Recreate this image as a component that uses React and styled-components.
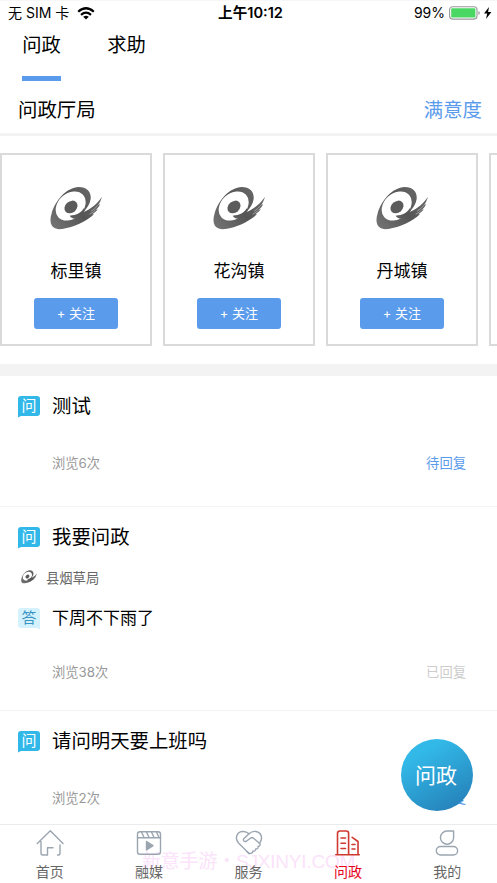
import React from 'react';
import styled, { createGlobalStyle, css } from 'styled-components';

const palette = {
  blue: '#5a9bec',
  cyan: '#32b8e8',
  red: '#e60020',
  iconRed: '#d0392f',
  icon: '#9aa5b0',
  line: '#f3f3f3',
};

const GlobalStyle = createGlobalStyle`
  * {
    box-sizing: border-box;
  }
  body {
    margin: 0;
    background: #fff;
    color: #000;
    font-family: Inter, 'Noto Sans CJK SC', sans-serif;
    overflow: hidden;
  }
`;

const Page = styled.div`
  position: relative;
  display: flex;
  flex-direction: column;
  width: 497px;
  height: 883px;
  overflow: hidden;
`;

const StatusBar = styled.div`
  display: grid;
  grid-template-columns: 1fr auto 1fr;
  align-items: center;
  flex: none;
  height: 26px;
  padding: 0 5px 1px 8px;
  border-top: 1px solid #f7f7f7;
  font-size: 14px;
  line-height: 24px;
  white-space: nowrap;
`;

const StatusGroup = styled.div`
  display: flex;
  align-items: center;
  justify-content: ${({ end }) => (end ? 'flex-end' : 'flex-start')};
`;

const Carrier = styled.span`
  width: 62px;
  margin-right: 7px;
`;

const Clock = styled.div`
  padding-left: 1px;
  font-weight: 600;
  font-size: 14.6px;
`;

const Percent = styled.span`
  margin-right: 4px;
`;

const Tabs = styled.div`
  display: flex;
  flex: none;
  height: 55px;
  padding-left: 22px;
  gap: 46px;
`;

const Tab = styled.div`
  width: 39px;
  height: 55px;
  font-size: 19.3px;
  line-height: 39px;
  white-space: nowrap;
  text-align: center;
  ${({ active }) =>
    active &&
    css`
      border-bottom: 5px solid ${palette.blue};
    `}
`;

const SectionHead = styled.div`
  display: flex;
  justify-content: space-between;
  flex: none;
  height: 55px;
  padding: 0 15px 0 18px;
  border-bottom: 3px solid ${palette.line};
  font-size: 19.4px;
  line-height: 59px;
`;

const MoreLink = styled.span`
  color: ${palette.blue};
`;

const Offices = styled.div`
  display: flex;
  flex: none;
  gap: 11px;
  height: 240px;
  padding: 17px 0 17px;
  border-bottom: 12px solid ${palette.line};
  overflow: hidden;
`;

const Card = styled.div`
  display: flex;
  flex: none;
  flex-direction: column;
  align-items: center;
  width: 152px;
  height: 193px;
  padding-top: 31px;
  border: 2px solid #dadada;
`;

const OfficeName = styled.div`
  margin-top: 27px;
  font-size: 17px;
  line-height: 28px;
`;

const FollowButton = styled.button`
  width: 84px;
  height: 31px;
  margin-top: 13px;
  padding: 0 0 2px;
  border: none;
  border-radius: 3px;
  background: ${palette.blue};
  color: #fff;
  font: inherit;
  font-size: 13px;
`;

const Row = styled.div`
  display: flex;
  flex: none;
  flex-direction: column;
  height: ${({ height }) => height}px;
  padding: 15px 31px 0 18px;
  border-bottom: 1px solid ${palette.line};
`;

const Line = styled.div`
  display: flex;
  align-items: center;
  height: 30px;
`;

const Badge = styled.span`
  display: block;
  width: 22px;
  height: 20px;
  margin: -1px 12px 0 0;
  border-radius: ${({ answer }) => (answer ? '3px 3px 0 3px' : '3px 3px 3px 0')};
  background: ${({ answer }) => (answer ? '#d3f2fd' : palette.cyan)};
  color: ${({ answer }) => (answer ? '#3a93c4' : '#fff')};
  font-size: 15px;
  line-height: 19px;
  text-align: center;
`;

const BadgeTail = styled.i`
  display: block;
  width: 4px;
  height: 2px;
  margin-top: 1px;
  margin-left: ${({ answer }) => (answer ? '18px' : '0')};
  background: ${({ answer }) => (answer ? '#d3f2fd' : palette.cyan)};
  clip-path: ${({ answer }) => (answer ? 'polygon(0 0, 100% 0, 100% 100%)' : 'polygon(0 0, 100% 0, 0 100%)')};
`;

const Title = styled.span`
  font-size: 19.4px;
  line-height: 30px;
`;

const Agency = styled.div`
  display: flex;
  align-items: center;
  height: 20px;
  margin: 15px 0 16px 3px;
  gap: 9px;
  color: #666;
  font-size: 13.3px;
`;

const Answer = styled.span`
  font-size: 17px;
  line-height: 30px;
`;

const Meta = styled.div`
  display: flex;
  justify-content: space-between;
  margin-top: ${({ top }) => top}px;
  padding-left: 34px;
  color: #999;
  font-size: 13.3px;
  line-height: 20px;
`;

const State = styled.span`
  color: ${({ replied }) => (replied ? '#ccc' : palette.blue)};
`;

const AskButton = styled.button`
  position: absolute;
  left: 401px;
  top: 739px;
  width: 72px;
  height: 72px;
  padding: 0 2px 2px 0;
  border: none;
  border-radius: 50%;
  background: linear-gradient(150deg, #32b9e8 22%, #2580b8 92%);
  color: #fff;
  font: inherit;
  font-size: 21px;
`;

const NavBar = styled.div`
  position: absolute;
  left: 0;
  right: 0;
  bottom: 0;
  display: flex;
  height: 59px;
  border-top: 1px solid #ebebeb;
  background: #fff;
`;

const NavItem = styled.div`
  position: relative;
  z-index: 1;
  display: flex;
  flex: 1;
  flex-direction: column;
  align-items: center;
  padding-top: 4px;
  color: ${({ active }) => (active ? palette.red : '#666')};
  font-size: 14px;
  line-height: 20px;

  svg {
    flex: none;
    margin-bottom: 5px;
    stroke: ${({ active }) => (active ? palette.iconRed : palette.icon)};
  }
`;

const Watermark = styled.div`
  position: absolute;
  left: 142px;
  top: 24px;
  color: #fbe3fa;
  font-family: 'Liberation Sans', 'Noto Sans CJK SC', sans-serif;
  font-size: 19px;
  letter-spacing: -0.2px;
  line-height: 26px;
  white-space: nowrap;
  pointer-events: none;
`;

const Swirl = ({ width = 52 }) => (
  <svg width={width} height={width * 0.846} viewBox="31 33 156 132" fill="none">
    <defs>
      <linearGradient id="swirl" gradientUnits="userSpaceOnUse" x1="31" y1="165" x2="187" y2="33">
        <stop offset="0" stopColor="#777" />
        <stop offset="0.5" stopColor="#555" />
        <stop offset="1" stopColor="#707070" />
      </linearGradient>
    </defs>
    <path
      fill="url(#swirl)"
      d="M117 36C143 36 155 51 153 72C151 86 143 99 131 111C156 101 173 85 187 65C184 76 180 84 175 91L182 87C178 95 173 101 168 105L175 103C170 109 164 114 158 118L163 118C138 140 103 157 68 162C37 166 26 145 36 115C47 75 82 37 117 36Z"
    />
    <ellipse cx="93" cy="93" rx="50" ry="38" transform="rotate(-42 93 93)" fill="#fff" />
    <path fill="url(#swirl)" d="M90 122C112 121 124 114 132 100L136 106L131 111L136 115L120 140L106 131C98 130 93 127 90 122Z" />
    <path stroke="#fff" strokeWidth="1.2" d="M175 91Q165 102 154 109M168 105Q160 112 150 118" />
    <ellipse cx="94" cy="96" rx="21.5" ry="17" transform="rotate(-42 94 96)" fill="#5b5b5b" />
  </svg>
);

const WifiIcon = () => (
  <svg width="18" height="13" viewBox="0 0 18 13" fill="none" stroke="#000" strokeWidth="2.2">
    <path d="M1.2 4.7Q9 -2.2 16.8 4.7M4 7.8Q9 3.5 14 7.8" />
    <path d="M6.2 9.7Q9 7.6 11.8 9.7L9 12.5Z" fill="#000" stroke="none" />
  </svg>
);

const BatteryIcon = () => (
  <svg width="43" height="14" viewBox="0 0 43 14">
    <rect x="0.6" y="0.7" width="27.4" height="12.4" rx="3" fill="#fff" stroke="#999" strokeWidth="1.1" />
    <rect x="2.2" y="2.2" width="24.2" height="9.4" rx="1.2" fill="#4bd763" />
    <path d="M29.4 5V9Q30.8 8.4 30.8 7T29.4 5Z" fill="#999" />
    <path d="M40 1L35 7.6H38.2L37 13L42.4 6H39.1Z" fill="#000" />
  </svg>
);

// All tab bar icons share a 28x28 box
const NavIcon = ({ children }) => (
  <svg width="28" height="28" viewBox="0 0 28 28" fill="none" strokeWidth="1.4" strokeLinecap="round" strokeLinejoin="round">
    {children}
  </svg>
);

const HomeIcon = () => (
  <NavIcon>
    <path d="M1.3 14.5L14.3 1.7L27 14.5M5 12.8V24Q5 26 7 26H11.5V18.7H17M21.5 26H22.5Q24 26 24 24V16" />
  </NavIcon>
);

const MediaIcon = () => (
  <NavIcon>
    <rect x="2.5" y="2.8" width="23" height="22.5" rx="2.5" />
    <path d="M2.5 8.8H25.5M6.5 3L9 8.5M11.5 3L14 8.5M16.5 3L19 8.5M21.5 3L24 8.5" />
    <path d="M11.5 12.5L18 16.7L11.5 21Z" fill={palette.icon} />
  </NavIcon>
);

const ServiceIcon = () => (
  <NavIcon>
    <path d="M14 24.5L3.5 14C-0.5 9.5 1.8 3 7.2 2.5Q11 2 14 4.8Q17 1.8 21 2.5C27 3.7 28 10 24.5 14.2" />
    <path d="M14 4.8L8.5 10Q8 13 11 12.5L16 8.8H18L25 14.7Q25.5 17 23 17.5Q23.5 20 20.7 20Q20.5 22.5 18 22Q17.5 25 14 24.5L12 22.5" />
  </NavIcon>
);

const OfficeIcon = () => (
  <NavIcon>
    <path strokeWidth="1.6" d="M1.8 25.7H25.3M3.5 25.5V4.5Q3.5 2 6 2H12.3Q14.6 2 14.6 4.5V25.5M18.2 8.3L24 12.5V25.5M7 9H11.5M7 14.2H11.5M7 19.5H11.5M18 15.5H21M18 20H21" />
  </NavIcon>
);

const MineIcon = () => (
  <NavIcon>
    <path d="M20.6 2V9.2A6.6 6.6 0 1 1 14 2Z" />
    <rect x="3.3" y="17.5" width="21.3" height="8.5" rx="4.25" />
  </NavIcon>
);

const offices = ['标里镇', '花沟镇', '丹城镇'];

const navItems = [
  { label: '首页', Icon: HomeIcon },
  { label: '融媒', Icon: MediaIcon },
  { label: '服务', Icon: ServiceIcon },
  { label: '问政', Icon: OfficeIcon, active: true },
  { label: '我的', Icon: MineIcon },
];

const Question = ({ height, title, views, replied, agency, answer, metaTop }) => (
  <Row height={height}>
    <Line>
      <Badge>
        问
        <BadgeTail />
      </Badge>
      <Title>{title}</Title>
    </Line>
    {agency && (
      <Agency>
        <Swirl width={16} />
        {agency}
      </Agency>
    )}
    {answer && (
      <Line>
        <Badge answer>
          答
          <BadgeTail answer />
        </Badge>
        <Answer>{answer}</Answer>
      </Line>
    )}
    <Meta top={metaTop}>
      <span>浏览{views}次</span>
      <State replied={replied}>{replied ? '已回复' : '待回复'}</State>
    </Meta>
  </Row>
);

const App = () => {
  return (
    <Page>
      <GlobalStyle />
      <StatusBar>
        <StatusGroup>
          <Carrier>无 SIM 卡</Carrier>
          <WifiIcon />
        </StatusGroup>
        <Clock>上午10:12</Clock>
        <StatusGroup end>
          <Percent>99%</Percent>
          <BatteryIcon />
        </StatusGroup>
      </StatusBar>
      <Tabs>
        <Tab active>问政</Tab>
        <Tab>求助</Tab>
      </Tabs>
      <SectionHead>
        <span>问政厅局</span>
        <MoreLink>满意度</MoreLink>
      </SectionHead>
      <Offices>
        {offices.map(name => (
          <Card key={name}>
            <Swirl />
            <OfficeName>{name}</OfficeName>
            <FollowButton>+ 关注</FollowButton>
          </Card>
        ))}
        <Card />
      </Offices>
      <Question height={131} title={'测试'} views={6} metaTop={32} />
      <Question
        height={204}
        title={'我要问政'}
        views={38}
        agency={'县烟草局'}
        answer={'下周不下雨了'}
        metaTop={29}
        replied
      />
      <Question height={131} title={'请问明天要上班吗'} views={2} metaTop={32} />
      <AskButton>问政</AskButton>
      <NavBar>
        <Watermark>新意手游・SJXINYI.COM</Watermark>
        {navItems.map(({ label, Icon, active }) => (
          <NavItem key={label} active={active}>
            <Icon />
            {label}
          </NavItem>
        ))}
      </NavBar>
    </Page>
  );
};

export default App;
